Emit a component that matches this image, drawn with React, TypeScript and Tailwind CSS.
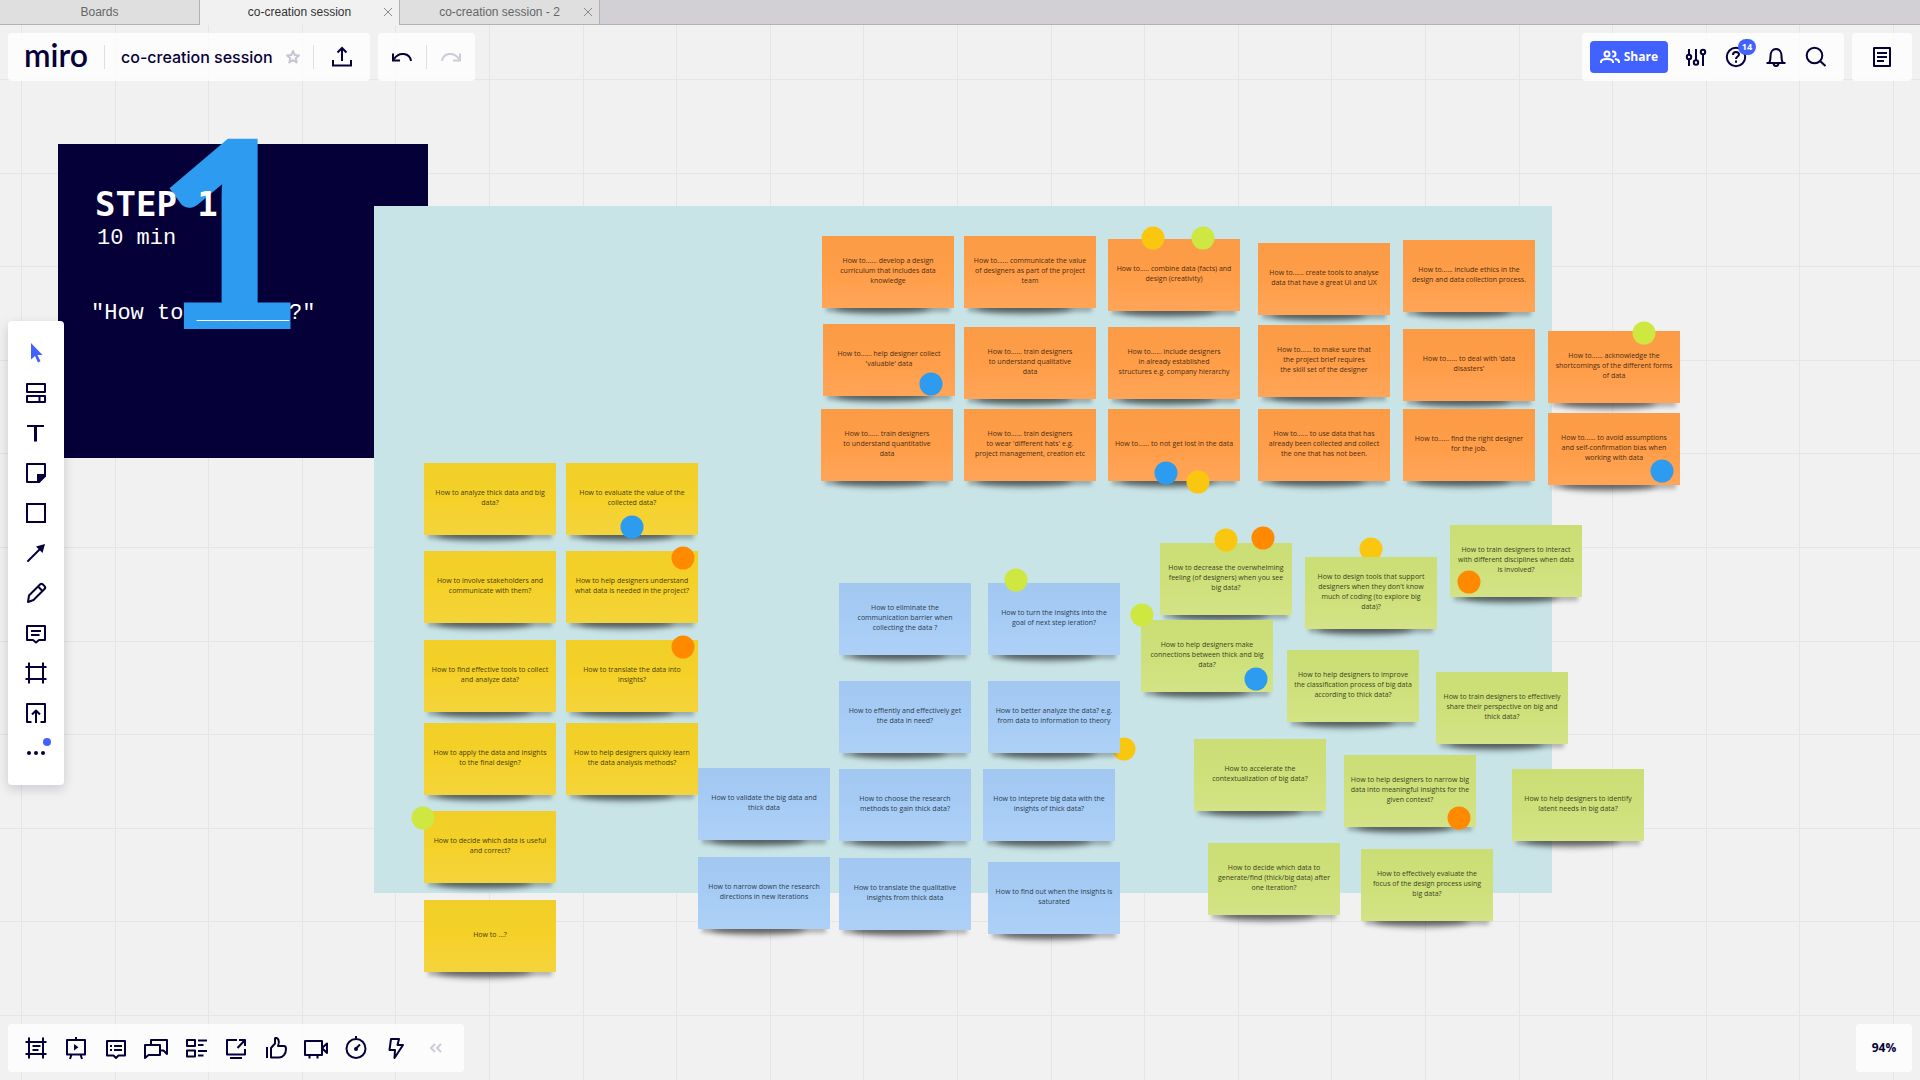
import React from "react";

type Tone = "orange" | "yellow" | "blue" | "green";
type DotTone = "amber" | "lime" | "azure" | "tangerine";
type NoteData = { x: number; y: number; tone: Tone; text: string };
type DotData = { x: number; y: number; tone: DotTone };

const NOTE_FACE: Record<Tone, string> = {
  orange: "from-[#fb9b46] via-[#ff9d48] to-[#ffa558] text-[#4d2d10]",
  yellow: "from-[#f0cf28] via-[#f5d128] to-[#f4d43c] text-[#4a3e0e]",
  blue: "from-[#a2c7f1] via-[#a6ccf5] to-[#aed0f7] text-[#2b3d50]",
  green: "from-[#cbde76] via-[#cee079] to-[#d3e386] text-[#3c4522]",
};

const DOT_FACE: Record<DotTone, string> = {
  amber: "bg-[#fac710]",
  lime: "bg-[#cee741]",
  azure: "bg-[#2d9bf0]",
  tangerine: "bg-[#ff8a00]",
};

const NOTES: NoteData[] = [
  { x: 822, y: 236, tone: "orange", text: "How to...... develop a design\ncurriculum that includes data\nknowledge" },
  { x: 964, y: 236, tone: "orange", text: "How to...... communicate the value\nof designers as part of the project\nteam" },
  { x: 1108, y: 239, tone: "orange", text: "How to..... combine data (facts) and\ndesign (creativity)" },
  { x: 1258, y: 243, tone: "orange", text: "How to...... create tools to analyse\ndata that have a great UI and UX" },
  { x: 1403, y: 240, tone: "orange", text: "How to...... include ethics in the\ndesign and data collection process." },
  { x: 823, y: 324, tone: "orange", text: "How to...... help designer collect\n'valuable' data" },
  { x: 964, y: 327, tone: "orange", text: "How to...... train designers\nto understand qualitative\ndata" },
  { x: 1108, y: 327, tone: "orange", text: "How to...... include designers\nin already established\nstructures e.g. company hierarchy" },
  { x: 1258, y: 325, tone: "orange", text: "How to...... to make sure that\nthe project brief requires\nthe skill set of the designer" },
  { x: 1403, y: 329, tone: "orange", text: "How to...... to deal with 'data\ndisasters'" },
  { x: 1548, y: 331, tone: "orange", text: "How to...... acknowledge the\nshortcomings of the different forms\nof data" },
  { x: 821, y: 409, tone: "orange", text: "How to...... train designers\nto understand quantitative\ndata" },
  { x: 964, y: 409, tone: "orange", text: "How to...... train designers\nto wear 'different hats' e.g.\nproject management, creation etc" },
  { x: 1108, y: 409, tone: "orange", text: "How to...... to not get lost in the data" },
  { x: 1258, y: 409, tone: "orange", text: "How to...... to use data that has\nalready been collected and collect\nthe one that has not been." },
  { x: 1403, y: 409, tone: "orange", text: "How to...... find the right designer\nfor the job." },
  { x: 1548, y: 413, tone: "orange", text: "How to...... to avoid assumptions\nand self-confirmation bias when\nworking with data" },

  { x: 698, y: 768, tone: "blue", text: "How to validate the big data and\nthick data" },
  { x: 698, y: 857, tone: "blue", text: "How to narrow down the research\ndirections in new iterations" },
  { x: 839, y: 583, tone: "blue", text: "How to eliminate the\ncommunication barrier when\ncollecting the data ?" },
  { x: 988, y: 583, tone: "blue", text: "How to turn the insights into the\ngoal of next step ieration?" },
  { x: 839, y: 681, tone: "blue", text: "How to effiently and effectively get\nthe data in need?" },
  { x: 988, y: 681, tone: "blue", text: "How to better analyze the data? e.g.\nfrom data to information to theory" },
  { x: 839, y: 769, tone: "blue", text: "How to choose the research\nmethods to gain thick data?" },
  { x: 983, y: 769, tone: "blue", text: "How to inteprete big data with the\ninsights of thick data?" },
  { x: 839, y: 858, tone: "blue", text: "How to translate the qualitative\ninsights from thick data" },
  { x: 988, y: 862, tone: "blue", text: "How to find out when the insights is\nsaturated" },

  { x: 424, y: 463, tone: "yellow", text: "How to analyze thick data and big\ndata?" },
  { x: 566, y: 463, tone: "yellow", text: "How to evaluate the value of the\ncollected data?" },
  { x: 424, y: 551, tone: "yellow", text: "How to involve stakeholders and\ncommunicate with them?" },
  { x: 566, y: 551, tone: "yellow", text: "How to help designers understand\nwhat data is needed in the project?" },
  { x: 424, y: 640, tone: "yellow", text: "How to find effective tools to collect\nand analyze data?" },
  { x: 566, y: 640, tone: "yellow", text: "How to translate the data into\ninsights?" },
  { x: 424, y: 723, tone: "yellow", text: "How to apply the data and insights\nto the final design?" },
  { x: 566, y: 723, tone: "yellow", text: "How to help designers quickly learn\nthe data analysis methods?" },
  { x: 424, y: 811, tone: "yellow", text: "How to decide which data is useful\nand correct?" },
  { x: 424, y: 900, tone: "yellow", text: "How to ...?" },

  { x: 1160, y: 543, tone: "green", text: "How to decrease the overwhelming\nfeeling (of designers) when you see\nbig data?" },
  { x: 1305, y: 557, tone: "green", text: "How to design tools that support\ndesigners when they don't know\nmuch of coding (to explore big\ndata)?" },
  { x: 1450, y: 525, tone: "green", text: "How to train designers to interact\nwith different disciplines when data\nis involved?" },
  { x: 1141, y: 620, tone: "green", text: "How to help designers make\nconnections between thick and big\ndata?" },
  { x: 1287, y: 650, tone: "green", text: "How to help designers to improve\nthe classification process of big data\naccording to thick data?" },
  { x: 1436, y: 672, tone: "green", text: "How to train designers to effectively\nshare their perspective on big and\nthick data?" },
  { x: 1194, y: 739, tone: "green", text: "How to accelerate the\ncontextualization of big data?" },
  { x: 1344, y: 755, tone: "green", text: "How to help designers to narrow big\ndata into meaningful insights for the\ngiven context?" },
  { x: 1512, y: 769, tone: "green", text: "How to help designers to identify\nlatent needs in big data?" },
  { x: 1208, y: 843, tone: "green", text: "How to decide which data to\ngenerate/find (thick/big data) after\none iteration?" },
  { x: 1361, y: 849, tone: "green", text: "How to effectively evaluate the\nfocus of the design process using\nbig data?" },
];

const DOTS_BEHIND: DotData[] = [
  { x: 1124, y: 749, tone: "amber" },
  { x: 1371, y: 549, tone: "amber" },
];

const DOTS_FRONT: DotData[] = [
  { x: 1153, y: 238, tone: "amber" },
  { x: 1203, y: 238, tone: "lime" },
  { x: 931, y: 384, tone: "azure" },
  { x: 1166, y: 473, tone: "azure" },
  { x: 1198, y: 482, tone: "amber" },
  { x: 1644, y: 333, tone: "lime" },
  { x: 1662, y: 471, tone: "azure" },
  { x: 632, y: 527, tone: "azure" },
  { x: 683, y: 558, tone: "tangerine" },
  { x: 683, y: 647, tone: "tangerine" },
  { x: 423, y: 818, tone: "lime" },
  { x: 1016, y: 580, tone: "lime" },
  { x: 1142, y: 615, tone: "lime" },
  { x: 1226, y: 540, tone: "amber" },
  { x: 1263, y: 538, tone: "tangerine" },
  { x: 1469, y: 582, tone: "tangerine" },
  { x: 1256, y: 679, tone: "azure" },
  { x: 1459, y: 818, tone: "tangerine" },
];

function Note({ note }: { note: NoteData }) {
  return (
    <article className="absolute h-[72px] w-[132px]" style={{ left: note.x, top: note.y }}>
      <span className="absolute -bottom-1 left-1 right-1 h-2 bg-black/25 blur-[2px]" />
      <span className="absolute -bottom-1.5 left-3 right-6 h-3 rounded-[50%] bg-black/45 blur-[3px]" />
      <p
        className={`relative flex h-full items-center justify-center whitespace-pre bg-gradient-to-b pb-0.5 text-center font-['Open_Sans',sans-serif] text-[7px] leading-[10px] ${NOTE_FACE[note.tone]}`}
      >
        {note.text}
      </p>
    </article>
  );
}

function Dot({ dot }: { dot: DotData }) {
  return (
    <span
      className={`absolute size-[23px] -translate-x-1/2 -translate-y-1/2 rounded-full ${DOT_FACE[dot.tone]}`}
      style={{ left: dot.x, top: dot.y }}
    />
  );
}

const GRID_STEP = 93.6;

function GridLines() {
  return (
    <svg className="absolute inset-0 size-full" stroke="#e5e5e5" strokeWidth="1" aria-hidden="true">
      {Array.from({ length: 42 }, (_, i) => {
        const x = Math.round(21 + i * GRID_STEP) + 0.5;
        return <line key={`v${i}`} x1={x} x2={x} y1="0" y2="100%" />;
      })}
      {Array.from({ length: 24 }, (_, i) => {
        const y = Math.round(79 + i * GRID_STEP) + 0.5;
        return <line key={`h${i}`} y1={y} y2={y} x1="0" x2="100%" />;
      })}
    </svg>
  );
}

function Board() {
  return (
    <main className="absolute inset-0 overflow-hidden">
      <GridLines />
      <section className="absolute left-[58px] top-[144px] h-[314px] w-[370px] bg-[#050038] font-['Liberation_Mono',monospace] text-white">
        <span className="absolute left-[96px] top-[-73px] font-['Lato',sans-serif] text-[262px] font-black leading-[314px] text-[#2d9bf0]">1</span>
        <h1 className="absolute left-[37px] top-[40px] whitespace-pre font-['DejaVu_Sans_Mono',monospace] text-[34px] font-bold leading-[40px]">STEP 1</h1>
        <p className="absolute left-[39px] top-[81px] whitespace-pre text-[22px] leading-[28px]">10 min</p>
        <p className="absolute left-[33px] top-[156px] whitespace-pre text-[22px] leading-[28px]">"How to _______?"</p>
      </section>
      <div className="absolute left-[374px] top-[206px] h-[687px] w-[1178px] bg-[#c9e4e7]" />
      {DOTS_BEHIND.map((d) => (
        <Dot key={`${d.x}-${d.y}`} dot={d} />
      ))}
      {NOTES.map((n) => (
        <Note key={`${n.x}-${n.y}`} note={n} />
      ))}
      {DOTS_FRONT.map((d) => (
        <Dot key={`${d.x}-${d.y}`} dot={d} />
      ))}
    </main>
  );
}

function Icon({ children, className = "" }: { children: React.ReactNode; className?: string }) {
  return (
    <svg viewBox="0 0 24 24" fill="none" stroke="currentColor" strokeWidth="2" className={`size-6 shrink-0 ${className}`} aria-hidden="true">
      {children}
    </svg>
  );
}

const FRAME = "M5 1.500v21M19 1.500v21M1.500 6h21M1.500 18h21";

const TOOLS: { label: string; icon: React.ReactNode; active?: boolean }[] = [
  { label: "Select", active: true, icon: <path d="M7 2v16.500l4-3.500 3 6.500 2.500-1.200-3-6.300h5z" fill="currentColor" stroke="none" /> },
  { label: "Templates", icon: <path d="M3 3h18v8H3zM3 15h18v6H3zM15.500 15v6" strokeLinejoin="round" /> },
  { label: "Text", icon: <><path d="M3 5h17" /><path d="M11.500 5v15.500" strokeWidth="3" /></> },
  { label: "Sticky note", icon: <><path d="M21 14V3H3v18h11z" strokeLinejoin="round" /><path d="M13 22v-9h9v2.500L15.500 22z" fill="currentColor" stroke="none" /></> },
  { label: "Shape", icon: <path d="M3 3h18v18H3z" /> },
  { label: "Connection line", icon: <><path d="M4 20 18 6" strokeLinecap="round" /><path d="M21 3l-2.500 9-6.500-6.500z" fill="currentColor" stroke="none" /></> },
  { label: "Pen", icon: <path d="M4 21l1-6.500L16 3.500c.9-.9 2-.9 2.900 0l1.600 1.600c.9.900.9 2 0 2.900L9.500 19zM14 5.500l4.500 4.500" strokeLinejoin="round" /> },
  { label: "Comment", icon: <><path d="M3 5h18v14h-6l-3 2.500L9 19H3z" strokeLinejoin="round" /><path d="M7 10h10M7 14h8.500" /></> },
  { label: "Frame", icon: <path d={FRAME} /> },
  { label: "Upload", icon: <path d="M7.500 21H3V3h18v18h-4.500M12 22V10M8 13.500l4-4 4 4" strokeLinejoin="round" /> },
  { label: "More", icon: <g fill="currentColor" stroke="none"><circle cx="5" cy="12" r="2" /><circle cx="12" cy="12" r="2" /><circle cx="19" cy="12" r="2" /></g> },
];

const FOOTER_TOOLS: { label: string; icon: React.ReactNode }[] = [
  { label: "Frames", icon: <path d={`${FRAME}M8.500 10h8M8.500 14h6`} /> },
  { label: "Presentation", icon: <><path d="M3 4h18v14.500H3zM12 4V1M7.500 18.500 6 23M16.500 18.500 18 23" strokeLinejoin="round" /><path d="M10 8v6.500l4.500-3.300z" fill="currentColor" stroke="none" /></> },
  { label: "Comments", icon: <><path d="M3 5h18v14.500h-6.500L12 22l-2.500-2.500H3z" strokeLinejoin="round" /><path d="M6 10h2M10 10h8M6 14h2M10 14h8" /></> },
  { label: "Chat", icon: <path d="M1 22V9h15v10H4.500zM7 9V4h16v14l-3.500-3.500H16" strokeLinejoin="round" /> },
  { label: "Cards", icon: <path d="M3 4h8v6H3zM3 14.500h8v6H3zM14 4.500h9M14 9h5.500M14 15h9M14 19.500h5.500" strokeLinejoin="round" /> },
  { label: "Screen sharing", icon: <path d="M13 4H3v14.500h18V13M13.500 12 21 4M15 4h6v6M6 22h12" strokeLinejoin="round" /> },
  { label: "Voting", icon: <path d="M3 11v11M7 21.500V12l4-4.500V2.500c0-.800 2.500-.800 3.500 1.500s0 4.500-.500 6H20c1.500 0 2 1.500 2 3 0 5-3 8.500-7 8.500z" strokeLinejoin="round" /> },
  { label: "Video chat", icon: <path d="M1 5h17v14H1zM18 12l5-4.500v9.500zM5.500 19v3.500M13.500 19v3.500" strokeLinejoin="round" /> },
  { label: "Timer", icon: <><circle cx="12" cy="12.500" r="9.500" /><path d="M12 3V0M12 12.500l4-4" /><circle cx="12" cy="13" r="2" fill="currentColor" stroke="none" /></> },
  { label: "Apps", icon: <path d="M7 3h8l-1.500 6H19L10.500 22l.500-8H5.500z" strokeLinejoin="round" /> },
];

function Divider() {
  return <span className="h-6 w-px bg-[#dedee4]" />;
}

function TabBar() {
  return (
    <nav className="relative flex h-[25px] border-b border-[#b3b1b5] bg-[#d2d0d4] font-['Liberation_Sans',sans-serif] text-xs text-[#666]">
      <a href="#boards" className="flex w-[200px] items-center justify-center border-r border-[#b3b1b5] bg-[#dfdfdf]">Boards</a>
      <div className="relative -mb-px flex w-[200px] items-center justify-center border-r border-[#b3b1b5] bg-[#f1f1f1] pb-px text-[#333]">
        <a href="#session">co-creation session</a>
        <CloseTab />
      </div>
      <div className="relative flex w-[200px] items-center justify-center border-r border-[#b3b1b5] bg-[#dfdfdf]">
        <a href="#session-2">co-creation session - 2</a>
        <CloseTab />
      </div>
    </nav>
  );
}

function CloseTab() {
  return (
    <button type="button" aria-label="Close tab" className="absolute right-1.5 text-[#8a8a8a]">
      <svg viewBox="0 0 10 10" className="size-2.5" stroke="currentColor" aria-hidden="true">
        <path d="M1 1l8 8M9 1l-8 8" />
      </svg>
    </button>
  );
}

const PANEL = "flex h-12 items-center rounded bg-white/80";

function Header() {
  return (
    <header className="relative flex justify-between px-2 pt-2">
      <div className="flex gap-2">
        <div className={`${PANEL} pl-4 pr-4`}>
          <a href="#home" className="w-20 pb-1 font-['Lato',sans-serif] text-[32px] font-semibold leading-none">miro</a>
          <Divider />
          <button type="button" className="ml-4 font-['Inter',sans-serif] text-base font-medium">co-creation session</button>
          <button type="button" aria-label="Star board" className="ml-3 mr-3 text-[#c8c6d4]">
            <svg viewBox="0 0 16 16" className="size-4" fill="none" stroke="currentColor" strokeWidth="2" strokeLinejoin="round" aria-hidden="true">
              <path d="M8 2l1.700 4 4.300.400-3.300 2.800 1 4.300L8 11.200l-3.700 2.300 1-4.300L2 6.400 6.300 6z" />
            </svg>
          </button>
          <Divider />
          <button type="button" aria-label="Export" className="ml-4">
            <Icon><path d="M3 15v5.500h18V15M12 16V3M7.500 7.500 12 3l4.500 4.500" /></Icon>
          </button>
        </div>
        <div className={`${PANEL} gap-3 px-3`}>
          <button type="button" aria-label="Undo">
            <Icon><path d="M21 16c-1-8-12-10-17-2M3 8.500v7h7" /></Icon>
          </button>
          <Divider />
          <button type="button" aria-label="Redo" className="text-[#cdcbd8]">
            <Icon><path d="M3 16c1-8 12-10 17-2M21 8.500v7h-7" /></Icon>
          </button>
        </div>
      </div>
      <div className="flex gap-2">
        <div className={`${PANEL} gap-4 pl-2 pr-4`}>
          <button type="button" className="flex h-8 items-center gap-1 rounded bg-[#4262ff] px-2.5 font-['Open_Sans',sans-serif] text-xs font-bold text-white">
            <svg viewBox="0 0 20 16" className="h-4 w-5" fill="none" stroke="currentColor" strokeWidth="2" aria-hidden="true">
              <circle cx="7" cy="5" r="2.500" />
              <path d="M1 14v-1c0-2.200 2-3 6-3s6 .8 6 3v1M12 2.500h1a2.500 2.500 0 0 1 0 5h-.500M15 10c2.500.3 4 1 4 3v1" />
            </svg>
            Share
          </button>
          <button type="button" aria-label="Settings">
            <Icon><path d="M5 4v6M5 15v6M12 4v11M19 10v11" /><circle cx="5" cy="12" r="2.200" /><circle cx="12" cy="17.500" r="2.200" /><circle cx="19" cy="7" r="2.200" /></Icon>
          </button>
          <button type="button" aria-label="Help, 14 updates" className="relative">
            <Icon><circle cx="12" cy="12" r="9.200" /><path d="M9 10c0-2 1.300-3 3-3s3 1 3 2.500c0 2-3 2-3 4.500M12 15.500v2.200" /></Icon>
            <span className="absolute -right-2 -top-1.5 flex h-4 w-[18px] items-center justify-center rounded-full bg-[#4262ff] font-['Open_Sans',sans-serif] text-[9px] font-bold text-white">14</span>
          </button>
          <button type="button" aria-label="Notifications">
            <Icon><path d="M2.500 18h19M5 18c1.500-2 1.500-4 1.500-7 0-4 2-7 5.500-7s5.500 3 5.500 7c0 3 0 5 1.500 7M9.500 18c0 4 5 4 5 0" /></Icon>
          </button>
          <button type="button" aria-label="Search">
            <Icon><circle cx="10.500" cy="10.500" r="7.800" /><path d="M16 16l5.500 5" /></Icon>
          </button>
        </div>
        <div className={`${PANEL} px-[18px]`}>
          <button type="button" aria-label="Board notes">
            <Icon><path d="M4 3h16v18H4z" strokeLinejoin="round" /><path d="M7 8h10M7 12h10M7 16h7" /></Icon>
          </button>
        </div>
      </div>
    </header>
  );
}

function Toolbar() {
  return (
    <aside className="w-14 rounded bg-white py-3 shadow-[0_4px_12px_rgba(5,0,56,0.16)]">
      {TOOLS.map((t) => (
        <button key={t.label} type="button" aria-label={t.label} className={`relative flex h-10 w-full items-center justify-center ${t.active ? "text-[#4262ff]" : ""}`}>
          <Icon>{t.icon}</Icon>
          {t.label === "More" && <span className="absolute right-[13px] top-[5px] size-2 rounded-full bg-[#4262ff]" />}
        </button>
      ))}
    </aside>
  );
}

function Footer() {
  return (
    <footer className="relative flex justify-between px-2 pb-2">
      <div className={`${PANEL} px-2`}>
        {FOOTER_TOOLS.map((t) => (
          <button key={t.label} type="button" aria-label={t.label} className="flex h-10 w-10 items-center justify-center">
            <Icon>{t.icon}</Icon>
          </button>
        ))}
        <button type="button" aria-label="Collapse" className="flex h-10 w-10 items-center justify-center text-[#cdcbd8]">
          <Icon><path d="M11 8l-4 4 4 4M17 8l-4 4 4 4" /></Icon>
        </button>
      </div>
      <button type="button" className={`${PANEL} w-14 justify-center font-['Open_Sans',sans-serif] text-xs font-bold`}>94%</button>
    </footer>
  );
}

export default function App() {
  return (
    <div className="relative flex min-h-screen flex-col overflow-hidden bg-[#f1f1f1] text-[#050038]">
      <Board />
      <TabBar />
      <Header />
      <div className="relative flex flex-1 items-center px-2">
        <Toolbar />
      </div>
      <Footer />
    </div>
  );
}
